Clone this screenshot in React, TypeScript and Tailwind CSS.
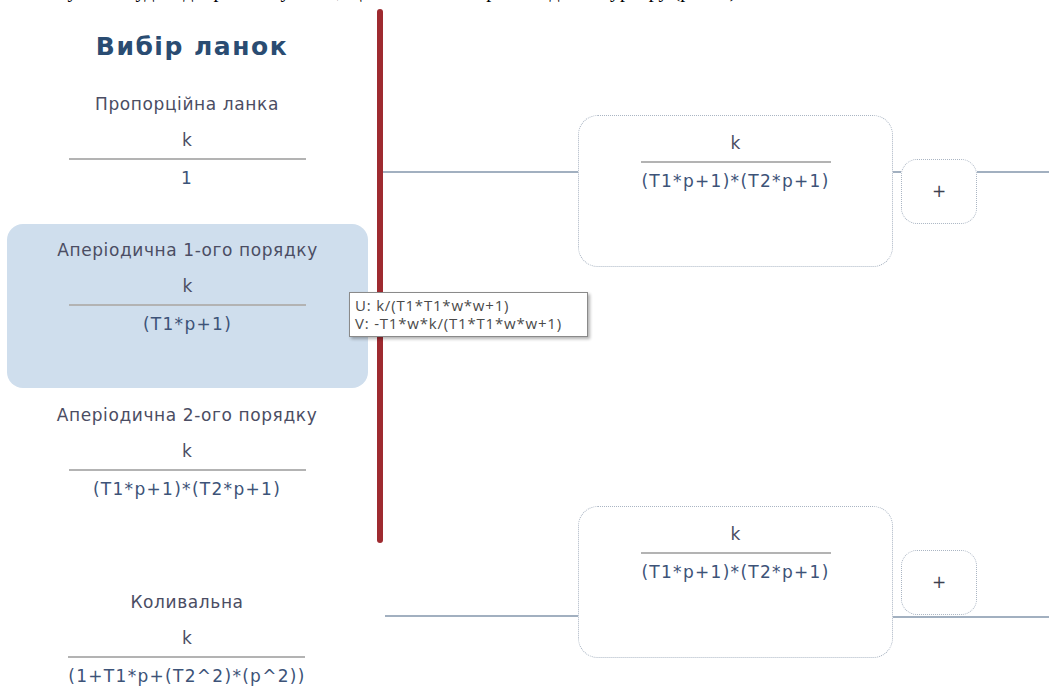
import React from "react";

type Link = {
  name: string;
  num: string;
  den: string;
};

const links: Link[] = [
  { name: "Пропорційна ланка", num: "k", den: "1" },
  { name: "Аперіодична 1-ого порядку", num: "k", den: "(T1*p+1)" },
  { name: "Аперіодична 2-ого порядку", num: "k", den: "(T1*p+1)*(T2*p+1)" },
  { name: "Коливальна", num: "k", den: "(1+T1*p+(T2^2)*(p^2))" },
];

const sans = "font-['DejaVu_Sans',Verdana,sans-serif]";

const Fraction = ({ num, den, width }: { num: string; den: string; width: string }) => (
  <div className="flex flex-col items-center">
    <div className="h-[24px] leading-[24px] text-[17px] text-[#4b4d63]">{num}</div>
    <div className={`mt-[6px] h-[2px] bg-[#b3b3b3] ${width}`} />
    <div className="mt-[6px] h-[24px] leading-[24px] text-[17px] tracking-[1.3px] text-[#3d5378] whitespace-nowrap">
      {den}
    </div>
  </div>
);

const LinkItem = ({ link }: { link: Link }) => (
  <div className="flex flex-col items-center">
    <div className="h-[24px] leading-[24px] text-[17px] tracking-[0.6px] text-[#4b4d63] whitespace-nowrap">
      {link.name}
    </div>
    <div className="mt-[12px]">
      <Fraction num={link.num} den={link.den} width="w-[237px]" />
    </div>
  </div>
);

// transfer function block on the scheme
const Block = ({ children }: { children: React.ReactNode }) => (
  <div className="w-[315px] h-[152px] shrink-0 rounded-[20px] border border-dotted border-[#aab5c3] bg-white pt-[15px] flex flex-col items-center">
    {children}
  </div>
);

const Adder = () => (
  <div className="w-[76px] h-[65px] shrink-0 rounded-[16px] border border-dotted border-[#aab5c3] bg-white flex items-center justify-center text-[17px] text-[#3d4150]">
    +
  </div>
);

const Wire = ({ className }: { className: string }) => (
  <div className={`h-[2px] bg-[#a2b0c0] ${className}`} />
);

export default function App() {
  return (
    <div className={`relative w-[1049px] h-[688px] overflow-hidden bg-white ${sans}`}>
      {/* tail of the document line above the figure */}
      <div className="h-[6px] overflow-hidden">
        <div className="-mt-[20px] pl-[40px] whitespace-nowrap leading-none text-[20px] text-black font-['Liberation_Serif',serif]">
          Результат буде відображено у вікні, що з'являється при наведенні курсору (рис. 3)
        </div>
      </div>

      <div className="mt-[3px] flex">
        {/* palette of links */}
        <div className="w-[374px] shrink-0 flex flex-col">
          <div className="mt-[23px] pl-[10px] h-[30px] leading-[30px] text-center text-[25px] tracking-[1.5px] font-bold text-[#2a4c72]">
            Вибір ланок
          </div>
          <div className="mt-[30px] h-[132px]">
            <LinkItem link={links[0]} />
          </div>
          <div className="ml-[7px] w-[361px] h-[164px] rounded-[16px] bg-[#cfdeed] pt-[14px]">
            <LinkItem link={links[1]} />
          </div>
          <div className="mt-[15px] h-[187px]">
            <LinkItem link={links[2]} />
          </div>
          <div>
            <LinkItem link={links[3]} />
          </div>
        </div>

        {/* splitter */}
        <div className="ml-[3px] w-[6px] h-[534px] shrink-0 rounded-full bg-[#9e2a30]" />

        {/* scheme */}
        <div className="flex-1 flex flex-col">
          <div className="mt-[106px] flex items-start">
            <Wire className="mt-[56px] w-[195px]" />
            <Block>
              <Fraction num="k" den="(T1*p+1)*(T2*p+1)" width="w-[190px]" />
            </Block>
            <Wire className="mt-[56px] w-[8px]" />
            <div className="mt-[44px]">
              <Adder />
            </div>
            <Wire className="mt-[56px] flex-1" />
          </div>

          <div className="mt-[239px] flex items-start">
            <Wire className="mt-[109px] ml-[2px] w-[193px]" />
            <Block>
              <Fraction num="k" den="(T1*p+1)*(T2*p+1)" width="w-[190px]" />
            </Block>
            <div className="flex-1 flex flex-col">
              <div className="mt-[44px] ml-[8px]">
                <Adder />
              </div>
              <Wire className="mt-[1px] w-full" />
            </div>
          </div>
        </div>
      </div>

      {/* hover hint with the frequency response */}
      <div className="absolute left-[349px] top-[292px] w-[239px] h-[45px] border border-[#8a8a8a] bg-white px-[5px] pt-[3px] shadow-[2px_2px_3px_rgba(0,0,0,0.3)] font-['Open_Sans',Arial,sans-serif] text-[15px] tracking-[0.8px] leading-[18px] text-[#4a4a4a] whitespace-nowrap">
        <div>U: k/(T1*T1*w*w+1)</div>
        <div>V: -T1*w*k/(T1*T1*w*w+1)</div>
      </div>
    </div>
  );
}
